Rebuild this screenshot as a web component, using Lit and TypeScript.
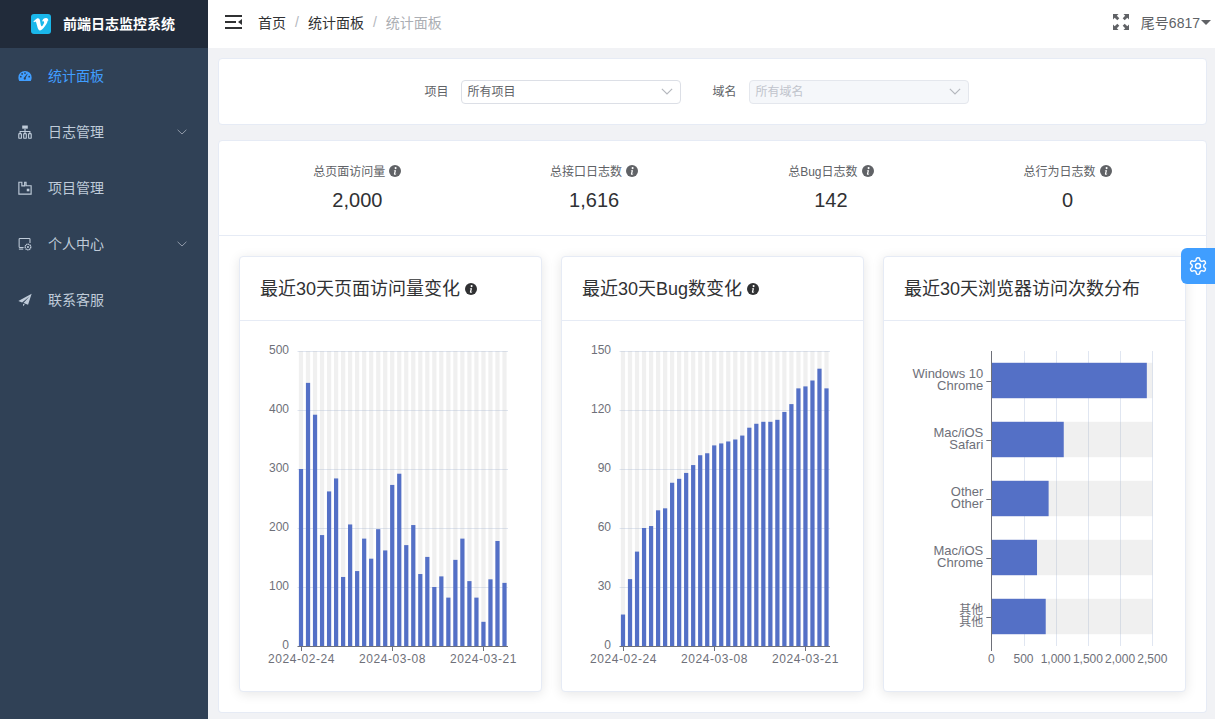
import { LitElement, html, css, svg } from "lit";
import { customElement } from "lit/decorators.js";

const infoIcon = (cls: string) => html`<svg class="info ${cls}" viewBox="0 0 12 12">
  <circle cx="6" cy="6" r="6" fill="currentColor"></circle>
  <circle cx="6.6" cy="3.1" r="1.05" fill="#fff"></circle>
  <path d="M5 5.2h2.1L6.2 8.7c-.1.3.2.4.9-.1l.2.3c-.9.8-1.5 1-2 .8-.5-.2-.5-.6-.4-1l.6-2.4c.1-.4-.2-.5-.7-.4z" fill="#fff"></path>
</svg>`;

const chevron = html`<svg class="chev" viewBox="0 0 10 6"><path d="M.6.8 5 5 9.4.8" fill="none" stroke="currentColor" stroke-width="1"></path></svg>`;

const icons = {
  gauge: html`<svg class="mi" viewBox="0 0 16 16"><path fill="currentColor" fill-rule="evenodd" d="M8 2.200a7.600 7.600 0 0 0-7.600 7.600c0 1.400.3 2.700 1 3.900h13.200c.7-1.200 1-2.500 1-3.900A7.600 7.600 0 0 0 8 2.200zM8 3.600a1 1 0 1 1 0 2 1 1 0 0 1 0-2zM3.200 9.800a1 1 0 1 1 0-2 1 1 0 0 1 0 2zm1.500-3.100a1 1 0 1 1 0-2 1 1 0 0 1 0 2zm3.300 5.600a1.600 1.600 0 0 1-.7-3l3.200-3.900.5.3-2.200 4.300A1.600 1.600 0 0 1 8 12.300zm4.800-2.500a1 1 0 1 1 0-2 1 1 0 0 1 0 2z"></path></svg>`,
  tree: html`<svg class="mi" viewBox="0 0 16 16" fill="none" stroke="currentColor" stroke-width="1.300"><path d="M4.800 .6h6.400v3.600H4.800z" fill="currentColor" stroke="none"></path><path d="M8 4.200v3.200M2.400 9.800V7.400h11.200v2.400M8 7.400v2.400"></path><rect x=".9" y="9.800" width="3" height="5.400" rx=".7"></rect><rect x="6.500" y="9.800" width="3" height="5.400" rx=".7"></rect><rect x="12.100" y="9.800" width="3" height="5.400" rx=".7"></rect></svg>`,
  box: html`<svg class="mi" viewBox="0 0 16 16" fill="none" stroke="currentColor" stroke-width="1.300"><path d="M1 15V1.400h3.400v4.200h3.200V1.400h1.600v4H15V15z"></path><rect x="10" y="8.800" width="3" height="3" fill="currentColor" stroke="none"></rect></svg>`,
  user: html`<svg class="mi" viewBox="0 0 16 16" fill="none" stroke="currentColor" stroke-width="1.200"><path d="M6.400 12H2.200a.9.9 0 0 1-.9-.9V2.600c0-.5.4-.9.9-.9h10.600c.5 0 .9.4.9.9v4.200"></path><path d="M1 13.800h5"></path><circle cx="11.400" cy="11.400" r="3.200" stroke-width="1.500" stroke-dasharray="1.600 .5"></circle><circle cx="11.400" cy="11.400" r="1.200" fill="currentColor" stroke="none"></circle></svg>`,
  plane: html`<svg class="mi" viewBox="0 0 16 16"><path fill="currentColor" d="M15.600.8.400 9.200l4.300 1.600L13 4 6.300 11.400l5.200 2.100zM5.800 12.200v3l2-2.200z"></path></svg>`,
};

const DATES = ["2024-02-24", "2024-03-08", "2024-03-21"];
const PV = [300, 446, 392, 188, 262, 284, 117, 206, 127, 182, 148, 198, 162, 273, 292, 171, 205, 122, 151, 100, 118, 82, 146, 182, 110, 82, 41, 113, 178, 107];
const BUG = [16, 34, 48, 60, 61, 69, 70, 83, 85, 88, 92, 97, 98, 102, 103, 104, 105, 107, 111, 113, 114, 114, 115, 119, 123, 131, 132, 135, 141, 131];
const BROWSERS: [string, string, number][] = [
  ["Windows 10", "Chrome", 2415],
  ["Mac/iOS", "Safari", 1125],
  ["Other", "Other", 890],
  ["Mac/iOS", "Chrome", 710],
  ["其他", "其他", 845],
];

const TOP = 30;
const BOTTOM = 325;

function columnChart(data: number[], max: number, step: number, x0: number) {
  const w = 210.5;
  const band = w / data.length;
  const barW = band * 0.6;
  const h = BOTTOM - TOP;
  const ticks: number[] = [];
  for (let v = 0; v <= max; v += step) ticks.push(v);
  return html`<svg class="chart" width="301" height="370" viewBox="0 0 301 370">
    ${ticks.map((v) => {
      const y = BOTTOM - (v / max) * h;
      return svg`
        ${v > 0 ? svg`<line class="grid" x1=${x0} x2=${x0 + w} y1=${y + 0.5} y2=${y + 0.5}></line>` : ""}
        <text class="num" text-anchor="end" x=${x0 - 8.5} y=${y + 2.5}>${v}</text>`;
    })}
    ${data.map((v, i) => {
      const x = x0 + band * i + (band - barW) / 2;
      return svg`<rect class="bg" x=${x} y=${TOP} width=${barW} height=${h}></rect>
        <rect class="bar" x=${x} y=${BOTTOM - (v / max) * h} width=${barW} height=${(v / max) * h}></rect>`;
    })}
    <line class="axis" x1=${x0} x2=${x0 + w} y1=${BOTTOM + 0.5} y2=${BOTTOM + 0.5}></line>
    ${[0, 13, 26].map((idx, k) => {
      const x = Math.floor(x0 + 0.5 + band * (idx + 0.5));
      return svg`<line class="axis" x1=${x + 0.5} x2=${x + 0.5} y1=${BOTTOM} y2=${BOTTOM + 5}></line>
        <text class="num date" text-anchor="middle" x=${x + 0.5} y=${BOTTOM + 17}>${DATES[k]}</text>`;
    })}
  </svg>`;
}

function barChart() {
  const x0 = 107.3;
  const w = 161;
  const max = 2500;
  const band = (BOTTOM - TOP) / 5;
  const barH = band * 0.6;
  const cls = (s: string) => (/^[\x00-\x7f]+$/.test(s) ? "lbl" : "num");
  return html`<svg class="chart" width="301" height="370" viewBox="0 0 301 370">
    ${[500, 1000, 1500, 2000, 2500].map((v) => {
      const x = Math.round(x0 + (v / max) * w);
      return svg`<line class="grid" x1=${x + 0.5} x2=${x + 0.5} y1=${TOP} y2=${BOTTOM}></line>`;
    })}
    ${BROWSERS.map(([a, b, v], i) => {
      const y = TOP + band * i + (band - barH) / 2;
      const c = TOP + band * i + band / 2;
      return svg`<rect class="bg" x=${x0} y=${y} width=${w} height=${barH}></rect>
        <rect class="bar" x=${x0} y=${y} width=${(v / max) * w} height=${barH}></rect>
        <line class="axis" x1=${x0 - 5} x2=${x0} y1=${Math.round(c) + 0.5} y2=${Math.round(c) + 0.5}></line>
        <text class=${cls(a)} text-anchor="end" x=${x0 - 8} y=${c - 3}>${a}</text>
        <text class=${cls(b)} text-anchor="end" x=${x0 - 8} y=${c + 9}>${b}</text>`;
    })}
    <line class="axis" x1=${Math.floor(x0) + 0.5} x2=${Math.floor(x0) + 0.5} y1=${TOP} y2=${BOTTOM + 5}></line>
    ${[0, 500, 1000, 1500, 2000, 2500].map((v) => {
      const x = x0 + (v / max) * w;
      return svg`<text class="num" text-anchor="middle" x=${x} y=${BOTTOM + 17}>${v.toLocaleString("en-US")}</text>`;
    })}
  </svg>`;
}

@customElement("app-root")
export class AppRoot extends LitElement {
  static styles = css`
    :host {
      display: flex;
      width: 100%;
      height: 100vh;
      overflow: hidden;
      position: relative;
      font-family: "Liberation Sans", "Noto Sans CJK SC", sans-serif;
      background: #f1f2f5;
    }
    .t { margin-bottom: 2px; }
    .side { width: 208px; flex: none; background: #304156; display: flex; flex-direction: column; }
    .logo {
      height: 48px; background: #212b3a; display: flex; align-items: center;
      padding-left: 31px; gap: 12px; color: #fff; font-size: 14px; font-weight: 700;
    }
    .logo svg { width: 20px; height: 20px; flex: none; }
    .item {
      height: 56px; display: flex; align-items: center; padding-left: 18px;
      font-size: 14px; color: #bfcbd9;
    }
    .item.active { color: #409eff; }
    .mi { width: 14px; height: 14px; margin-right: 16px; flex: none; }
    .chev { width: 10px; height: 6px; margin-left: auto; margin-right: 21px; color: #909aa9; }
    .main { flex: 1; min-width: 0; display: flex; flex-direction: column; }
    .top {
      height: 48px; flex: none; background: #fff; display: flex; align-items: center; box-sizing: border-box;
      padding: 0 4px 4px 17px; font-size: 14px;
    }
    .burger { width: 17px; height: 14px; margin-right: 16px; }
    .crumb { color: #303133; }
    .sep { color: #b4b7bd; margin: 0 9px; }
    .last { color: #abaeb3; }
    .right { margin-left: auto; display: flex; align-items: center; color: #606266; }
    .full { width: 16px; height: 16px; margin-right: 12px; }
    .caret { width: 0; height: 0; border: 5px solid transparent; border-top: 5px solid #606266; border-bottom: 0; margin-left: 1px; }
    .content { flex: 1; padding: 10px 8px 0 10px; display: flex; flex-direction: column; }
    .card { background: #fff; border: 1px solid #e6ebf5; border-radius: 4px; box-sizing: border-box; }
    .filter {
      height: 67px; display: flex; justify-content: center; align-items: center;
      font-size: 12px; color: #606266; margin-bottom: 15px;
    }
    .field { display: flex; align-items: center; gap: 12px; margin-right: 32px; }
    .select {
      width: 220px; height: 24px; box-sizing: border-box; border: 1px solid #dcdfe6; border-radius: 4px;
      display: flex; align-items: center; padding-left: 6px; color: #606266;
    }
    .select.off { background: #f5f7fa; border-color: #e4e7ed; color: #c0c4cc; }
    .select .chev { margin-right: 7px; color: #b4b7bd; width: 12px; height: 7px; }
    .stats {
      height: 96px; display: grid; grid-template-columns: repeat(4, 1fr); padding: 0 20px;
      border-radius: 4px 4px 0 0;
    }
    .stat { display: flex; flex-direction: column; align-items: center; padding-top: 21px; }
    .stat-l { display: flex; align-items: center; gap: 4px; font-size: 12px; color: #606266; height: 17px; }
    .info { width: 12px; height: 12px; flex: none; color: #606266; }
    .info.dark { color: #303133; }
    .stat-v { font-size: 20px; color: #303133; margin-top: 8px; line-height: 26px; }
    .board {
      height: 477px; padding: 20px; display: grid; grid-template-columns: repeat(3, 303px); gap: 19px;
      border-top: 0; border-radius: 0 0 4px 4px;
    }
    .panel { box-shadow: 0 2px 12px rgba(0, 0, 0, 0.1); overflow: hidden; height: 436px; min-width: 0; }
    .panel-h {
      height: 64px; box-sizing: border-box; border-bottom: 1px solid #e6ebf5; padding-left: 20px; display: flex; align-items: center;
      gap: 5px; font-size: 18px; color: #303133;
    }
    .panel-h .t { margin-bottom: 4px; }
    .chart { display: block; }
    .chart text { font-family: "Liberation Sans", "Noto Sans CJK SC", sans-serif; }
    .lbl { font-size: 13px; fill: #6e7079; }
    .num { font-size: 12px; fill: #6e7079; }
    .date { letter-spacing: 0.55px; }
    .grid { stroke: #e0e6f1; stroke-width: 1; }
    .axis { stroke: #6e7079; stroke-width: 1; }
    .bg { fill: rgba(180, 180, 180, 0.2); }
    .bar { fill: #5470c6; }
    .gear {
      position: absolute; top: 248px; right: 0; width: 34px; height: 36px; background: #409eff;
      border-radius: 6px 0 0 6px; display: flex; align-items: center; justify-content: center;
    }
    .gear svg { width: 20px; height: 20px; }
  `;

  render() {
    return html`
      <aside class="side">
        <div class="logo">
          <svg viewBox="0 0 20 20">
            <rect width="20" height="20" rx="3" fill="#1ab7ea"></rect>
            <path fill="#fff" d="M17 6.400c-.1 1.400-1 3.300-2.900 5.800-1.900 2.600-3.600 3.900-4.900 3.900-.8 0-1.500-.8-2.100-2.300L6 9.600c-.4-1.500-.9-2.300-1.400-2.300-.1 0-.5.200-1.100.7L2.800 7.100 5 5.200c1-.8 1.700-1.300 2.200-1.300 1.100-.1 1.900.7 2.200 2.400.3 1.900.5 3 .6 3.500.3 1.500.7 2.200 1.100 2.200.3 0 .8-.5 1.400-1.500.6-1 1-1.700 1-2.200.1-.9-.3-1.300-1-1.300-.4 0-.7.1-1.100.2.700-2.400 2.100-3.500 4.100-3.500 1.500.1 2.200 1 2.200 2.700z" transform="translate(-.4 .3)"></path>
          </svg>
          <span class="t">前端日志监控系统</span>
        </div>
        <div class="item active">${icons.gauge}<span class="t">统计面板</span></div>
        <div class="item">${icons.tree}<span class="t">日志管理</span>${chevron}</div>
        <div class="item">${icons.box}<span class="t">项目管理</span></div>
        <div class="item">${icons.user}<span class="t">个人中心</span>${chevron}</div>
        <div class="item">${icons.plane}<span class="t">联系客服</span></div>
      </aside>
      <div class="main">
        <header class="top">
          <svg class="burger" viewBox="0 0 17 14">
            <path d="M0 0h17v2H0zM0 6h11v2H0zM0 12h17v2H0z" fill="#303133"></path>
            <path d="M13 7l4-3v6z" fill="#303133"></path>
          </svg>
          <span class="crumb">首页</span><span class="sep">/</span><span class="crumb">统计面板</span><span class="sep">/</span><span class="last">统计面板</span>
          <div class="right">
            <svg class="full" viewBox="0 0 16 16" fill="#606266">
              <path d="M0 0h5.500L3.800 1.700 6.300 4.300 4.300 6.300 1.700 3.800 0 5.500zM16 0v5.500l-1.700-1.700-2.600 2.500-2-2 2.500-2.600L10.500 0zM0 16v-5.500l1.700 1.700 2.600-2.500 2 2-2.500 2.600L5.500 16zM16 16h-5.500l1.700-1.700-2.500-2.600 2-2 2.600 2.500 1.700-1.700z"></path>
            </svg>
            尾号6817<span class="caret"></span>
          </div>
        </header>
        <div class="content">
          <section class="card filter">
            <div class="field"><span class="t">项目</span><div class="select"><span class="t">所有项目</span>${chevron}</div></div>
            <div class="field"><span class="t">域名</span><div class="select off"><span class="t">所有域名</span>${chevron}</div></div>
          </section>
          <section class="card stats">
            ${[["总页面访问量", "2,000"], ["总接口日志数", "1,616"], ["总Bug日志数", "142"], ["总行为日志数", "0"]].map(
              ([l, v]) => html`<div class="stat">
                <div class="stat-l">${l}${infoIcon("")}</div>
                <div class="stat-v">${v}</div>
              </div>`
            )}
          </section>
          <section class="card board">
            <div class="card panel">
              <div class="panel-h"><span class="t">最近30天页面访问量变化</span>${infoIcon("dark")}</div>
              ${columnChart(PV, 500, 100, 57.5)}
            </div>
            <div class="card panel">
              <div class="panel-h"><span class="t">最近30天Bug数变化</span>${infoIcon("dark")}</div>
              ${columnChart(BUG, 150, 30, 57.5)}
            </div>
            <div class="card panel">
              <div class="panel-h"><span class="t">最近30天浏览器访问次数分布</span></div>
              ${barChart()}
            </div>
          </section>
        </div>
      </div>
      <div class="gear">
        <svg viewBox="0 0 24 24" fill="none" stroke="#fff" stroke-width="1.700" stroke-linejoin="round">
          <path d="M12.220 2h-.44a2 2 0 0 0-2 2v.18a2 2 0 0 1-1 1.730l-.43.25a2 2 0 0 1-2 0l-.15-.08a2 2 0 0 0-2.730.73l-.22.38a2 2 0 0 0 .73 2.730l.15.1a2 2 0 0 1 1 1.720v.51a2 2 0 0 1-1 1.740l-.15.09a2 2 0 0 0-.73 2.730l.22.38a2 2 0 0 0 2.730.73l.15-.08a2 2 0 0 1 2 0l.43.25a2 2 0 0 1 1 1.730V20a2 2 0 0 0 2 2h.44a2 2 0 0 0 2-2v-.18a2 2 0 0 1 1-1.730l.43-.25a2 2 0 0 1 2 0l.15.08a2 2 0 0 0 2.730-.73l.22-.39a2 2 0 0 0-.73-2.730l-.15-.08a2 2 0 0 1-1-1.740v-.5a2 2 0 0 1 1-1.740l.15-.09a2 2 0 0 0 .73-2.730l-.22-.38a2 2 0 0 0-2.730-.73l-.15.08a2 2 0 0 1-2 0l-.43-.25a2 2 0 0 1-1-1.730V4a2 2 0 0 0-2-2z"></path>
          <circle cx="12" cy="12" r="3"></circle>
        </svg>
      </div>
    `;
  }
}
